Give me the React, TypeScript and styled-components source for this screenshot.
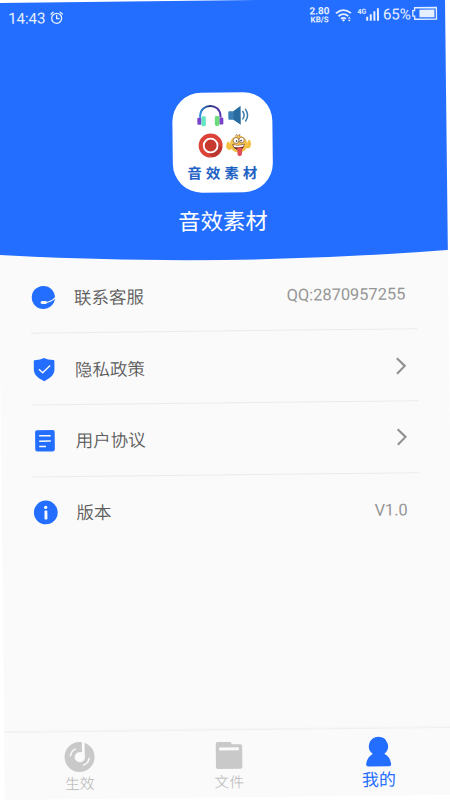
import React from "react";
import styled, { createGlobalStyle } from "styled-components";

const BLUE = "#236eff";
const CJK = `Roboto, "Noto Sans CJK SC", sans-serif`;

const GlobalStyle = createGlobalStyle`
  *, *::before, *::after { box-sizing: border-box; }
  html, body { margin: 0; height: 100%; overflow: hidden; background: #fff; }
  svg { display: block; flex: none; overflow: visible; }
`;

const Stage = styled.div`
  width: 450px;
  height: 800px;
  overflow: hidden;
  background: #fff;
  padding-top: 2.7px;
`;

const Screen = styled.main`
  display: flex;
  flex-direction: column;
  width: 449px;
  height: 797px;
  margin-left: -4px;
  background: #fafafa;
  font-family: ${CJK};
  transform: rotate(-0.65deg);
  transform-origin: 0 0;
`;

const Header = styled.header`
  display: flex;
  flex-direction: column;
  align-items: center;
  flex: none;
  height: 259.5px;
  color: #fff;
  background: ${BLUE};
  clip-path: circle(3364px at 50% -3104.5px);
`;

const StatusBar = styled.div`
  display: flex;
  align-items: center;
  justify-content: space-between;
  width: 100%;
  height: 32px;
  padding: 0 8.5px 0 12px;
  color: #e6efff;
`;

const StatusGroup = styled.div`
  display: flex;
  align-items: center;
`;

const StatusText = styled.span<{ $ml?: number }>`
  font-size: 15.2px;
  line-height: 20px;
  letter-spacing: -0.15px;
  margin-left: ${(p) => p.$ml ?? 0}px;
`;

const AlarmSlot = styled.span`
  margin-left: 4.5px;
  margin-top: -1px;
`;

const Speed = styled.div`
  display: flex;
  flex-direction: column;
  align-items: center;
  margin-right: 6px;
  margin-top: -1px;
  font-weight: 700;
  font-size: 10px;
  line-height: 10px;
`;

const SpeedUnit = styled.span`
  font-size: 8px;
  line-height: 8px;
`;

const Network = styled.div`
  display: flex;
  align-items: flex-start;
  margin-left: 5px;
  margin-top: -1px;
  font-weight: 700;
  font-size: 7px;
  line-height: 8px;
`;

const Logo = styled.div`
  display: flex;
  flex-direction: column;
  align-items: center;
  width: 100px;
  height: 100px;
  margin-top: 60px;
  padding-top: 10.5px;
  border-radius: 29px;
  background: #fff;
`;

const LogoGrid = styled.div`
  display: grid;
  grid-template-columns: 26px 26px;
  grid-template-rows: 24px 26px;
  gap: 5.5px 1.5px;
  padding-left: 5px;
  place-items: center;
`;

const LogoName = styled.span`
  margin-top: 6.5px;
  padding-left: 4px;
  font-size: 14.4px;
  line-height: 18px;
  font-weight: 700;
  letter-spacing: 4.1px;
  white-space: nowrap;
  color: #1f62c4;
`;

const AppTitle = styled.h1`
  margin: 12.5px 0 0;
  font-size: 22.4px;
  line-height: 32px;
  font-weight: 400;
`;

const List = styled.ul`
  flex: 1;
  margin: 0;
  padding: 0 31px 0 31px;
  list-style: none;
`;

const Item = styled.li`
  display: flex;
  align-items: center;
  height: 71.8px;
  padding-right: 12px;
  border-bottom: 1px solid #ebebeb;

  &:last-child {
    border-bottom-color: transparent;
  }
`;

const ItemIcon = styled.span`
  display: flex;
  justify-content: center;
  width: 25px;
`;

const ItemLabel = styled.span`
  flex: 1;
  margin-left: 18.7px;
  padding-top: 2px;
  font-size: 17.5px;
  line-height: 26px;
  font-weight: 350;
  color: #5c5c5c;
`;

const ItemValue = styled.span`
  padding-top: 3px;
  font-size: 16.4px;
  line-height: 24px;
  color: #959595;
`;

const TabBar = styled.nav`
  display: grid;
  grid-template-columns: repeat(3, 1fr);
  flex: none;
  height: 68px;
  border-top: 1px solid #efefef;
  box-shadow: 0 -1px 2px rgba(0, 0, 0, 0.025);
`;

const Tab = styled.div<{ $active?: boolean }>`
  display: flex;
  flex-direction: column;
  align-items: center;
  padding-top: ${(p) => (p.$active ? 8 : 10)}px;
  color: ${(p) => (p.$active ? BLUE : "#c9c9c9")};
`;

const TabLabel = styled.span<{ $active?: boolean }>`
  margin-top: ${(p) => (p.$active ? 3 : 2)}px;
  font-size: ${(p) => (p.$active ? 17 : 14.8)}px;
  line-height: 20px;
  font-weight: ${(p) => (p.$active ? 400 : 300)};
  color: ${(p) => (p.$active ? BLUE : "#b4b4b4")};
`;

const AlarmIcon = () => (
  <svg width="13" height="13" viewBox="0 0 13 13" fill="none" stroke="currentColor" strokeWidth="1.3" strokeLinecap="round">
    <circle cx="6.5" cy="7" r="5" />
    <path d="M6.5 4.2V7.3H9M.8 2.8 3 .9M12.2 2.8 10 .9" />
  </svg>
);

const WifiIcon = () => (
  <svg width="17" height="13" viewBox="0 0 17 13" fill="none" stroke="currentColor" strokeWidth="1.8">
    <path d="M.8 4.2Q8.3-2 15.8 4.2M3.3 7.1Q8.3 3 13.2 7.1M5.7 9.7Q8.3 7.8 10.7 9.7" />
    <path d="m8.3 12.6-1.7-1.7q1.7-1.2 3.3 0Z" fill="currentColor" stroke="none" />
    <path d="m12.6 9.6 1.5-1.8 1.5 1.8ZM12.6 10.8h3l-1.5 1.8Z" fill="currentColor" stroke="none" />
  </svg>
);

const SignalIcon = () => (
  <svg width="13" height="13" viewBox="0 0 13 13" fill="currentColor">
    <path d="M0 9h2v4H0zM3.6 6.5h2V13h-2zM7.2 3.5h2V13h-2zM10.8.5h2V13h-2z" />
  </svg>
);

const BatteryIcon = () => (
  <svg width="26" height="15" viewBox="0 0 26 15">
    <path d="M3.500.5H25.300v11.500H3.500V8.900H1.700V3.400h1.800Z" fill="none" stroke="currentColor" strokeWidth="1.300" />
    <path d="M8.300 2.500h15v7.600h-15z" fill="currentColor" />
  </svg>
);

const HeadphonesIcon = () => (
  <svg width="26" height="22" viewBox="0 0 26 22">
    <defs>
      <linearGradient id="band" x1="0" x2="1">
        <stop offset="0" stopColor="#2d8fe0" />
        <stop offset=".45" stopColor="#263777" />
        <stop offset="1" stopColor="#5a35b0" />
      </linearGradient>
    </defs>
    <path d="M2.8 13V11C3.4-1.8 22.6-1.8 23.2 11v2" fill="none" stroke="url(#band)" strokeWidth="2" />
    <rect x="0" y="13" width="4" height="7" rx="1" fill="#7745cb" />
    <rect x="22" y="13" width="4" height="7" rx="1" fill="#7745cb" />
    <rect x="4" y="11.5" width="4.5" height="10" rx="1.4" fill="#65e5c0" />
    <rect x="17.5" y="11.5" width="4.5" height="10" rx="1.4" fill="#6edb7c" />
  </svg>
);

const SpeakerIcon = () => (
  <svg width="20" height="20" viewBox="0 0 20 20">
    <path d="M1 6h4.500v8.500H1Q0 14.500 0 13.500V7Q0 6 1 6Z" fill="#3a80b7" />
    <path d="M5 6 12.400.5v19L5 14.500Z" fill="#286b9f" />
    <path d="M14.500 6.300q2.600 3.700 0 7.400M17.300 4.200q4 5.800 0 11.600" fill="none" stroke="#397dae" strokeWidth="1.500" strokeLinecap="round" />
  </svg>
);

const RecordIcon = () => (
  <svg width="24" height="24" viewBox="0 0 24 24">
    <circle cx="12" cy="12" r="12" fill="#dc4338" />
    <path d="m17 7.500 6.500 6.800A12 12 0 0 1 14 23.800L7 17Z" fill="#b93730" />
    <circle cx="12" cy="12" r="6.900" fill="#c8392f" stroke="#fff" strokeWidth="1.800" />
    <circle cx="12" cy="12" r="4" fill="#c8392f" />
  </svg>
);

const SmileyIcon = () => (
  <svg width="26" height="23" viewBox="0 0 26 23">
    <path d="M1.500 8 3 7l1.500 3 2 .5v4q-2.500 2-5 0Q-.5 12 1.500 8ZM24.500 6 23 5.500 21.500 9l-2 1v3.500q3 1.500 5-.5 1.800-3 0-7Z" fill="#f5bf42" />
    <ellipse cx="13" cy="10" rx="8.700" ry="8.500" fill="#f2c24b" />
    <path d="m10 2 1-2 1 1.500L14.500.3 14 2" fill="none" stroke="#aa742c" strokeWidth=".8" />
    <ellipse cx="10.500" cy="6.200" rx="2.900" ry="3" fill="#fff" stroke="#80552e" strokeWidth=".7" />
    <ellipse cx="16" cy="5.800" rx="2.700" ry="2.800" fill="#fff" stroke="#80552e" strokeWidth=".7" />
    <circle cx="11" cy="6.800" r=".8" fill="#2d211c" />
    <circle cx="15.500" cy="6.400" r=".8" fill="#2d211c" />
    <path d="M6.500 10q6.500 1.600 12.500-.5-.8 6-5.500 6.500Q8 15.800 6.500 10Z" fill="#693025" />
    <path d="M7.500 10.600q5.500 1.200 10.800-.4l-.6 2.200q-4.700 1-9.300.2Z" fill="#fff" />
    <path d="M11.500 13.800q2.500-1.500 5 .3l-.3 6.200q-2 3-4.300.5Z" fill="#df4d56" />
  </svg>
);

const ServiceIcon = () => (
  <svg width="24" height="24" viewBox="0 0 24 24">
    <circle cx="12" cy="12" r="11.600" fill={BLUE} />
    <path d="M13 17q6 .3 10.700-4.500" fill="none" stroke="#fafafa" strokeWidth="1.300" />
    <rect x="9.200" y="15.600" width="6.200" height="3" rx="1.500" fill="#fafafa" />
  </svg>
);

const ShieldIcon = () => (
  <svg width="22" height="24" viewBox="0 0 22 24">
    <path d="M11 .5Q14.500 2.500 20.400 2.600q.9 0 .9.900V12c0 5.500-4.300 9-10.300 11.700C5 21 .7 17.500.7 12V3.500q0-.9.9-.9Q7.500 2.500 11 .5Z" fill={BLUE} />
    <path d="m5.800 11.700 3.700 3.600L17 8.200" fill="none" stroke="#fafafa" strokeWidth="1.400" />
  </svg>
);

const DocumentIcon = () => (
  <svg width="20" height="22" viewBox="0 0 20 22">
    <rect x=".2" y=".6" width="19.600" height="21.400" rx="2" fill={BLUE} />
    <path d="M4.200 6.300h11.600M4.200 11.600h11.600M4.200 17h6.800" fill="none" stroke="#fafafa" strokeWidth="1.500" />
  </svg>
);

const InfoIcon = () => (
  <svg width="24" height="24" viewBox="0 0 24 24">
    <circle cx="12" cy="12" r="11.900" fill={BLUE} />
    <circle cx="12" cy="6.900" r="1.700" fill="#fafafa" />
    <rect x="10.700" y="10" width="2.900" height="9" rx=".8" fill="#fafafa" />
  </svg>
);

const ChevronIcon = () => (
  <svg width="11" height="18" viewBox="0 0 11 18" fill="none" stroke="#909090" strokeWidth="2.1">
    <path d="m1.800 1.700 7.800 7.800-7.800 7.800" />
  </svg>
);

const DiscIcon = () => (
  <svg width="30" height="30" viewBox="0 0 30 30">
    <circle cx="15" cy="15" r="15" fill="currentColor" />
    <circle cx="15.300" cy="15" r="5.200" fill="#fafafa" />
    <path d="M17.500 0h2.700v15h-2.700Z" fill="#fafafa" />
    <path d="M5.900 13.500Q7 8.500 11 7M24.500 16.500Q23.500 21.500 19 23" fill="none" stroke="#fafafa" strokeWidth="1.500" strokeLinecap="round" />
  </svg>
);

const FolderIcon = () => (
  <svg width="27" height="30" viewBox="0 0 27 30">
    <path d="M2 1.500h12.800q1 0 1.400 2.500H25q1.700 0 1.700 1.700v21q0 1.800-1.800 1.800H2.100q-1.800 0-1.800-1.800V3.300Q.3 1.500 2 1.500Z" fill="currentColor" />
    <rect x="3.500" y="7" width="20" height="3" rx="1.200" fill="#fafafa" />
  </svg>
);

const PersonIcon = () => (
  <svg width="26" height="30" viewBox="0 0 26 30" fill="currentColor">
    <path d="M13 0a9.600 9.600 0 0 1 5.800 17.200Q24.400 20 25.500 27.300 25.700 29.700 23.400 29.700H2.600Q.3 29.700.5 27.300 1.600 20 7.200 17.200A9.600 9.600 0 0 1 13 0Z" />
  </svg>
);

const items = [
  { label: "联系客服", icon: <ServiceIcon />, value: "QQ:2870957255" },
  { label: "隐私政策", icon: <ShieldIcon /> },
  { label: "用户协议", icon: <DocumentIcon /> },
  { label: "版本", icon: <InfoIcon />, value: "V1.0" },
];

const tabs = [
  { label: "生效", icon: <DiscIcon /> },
  { label: "文件", icon: <FolderIcon /> },
  { label: "我的", icon: <PersonIcon />, active: true },
];

export default function App() {
  return (
    <Stage>
      <GlobalStyle />
      <Screen>
        <Header>
          <StatusBar>
            <StatusGroup>
              <StatusText>14:43</StatusText>
              <AlarmSlot>
                <AlarmIcon />
              </AlarmSlot>
            </StatusGroup>
            <StatusGroup>
              <Speed>
                <span>2.80</span>
                <SpeedUnit>KB/S</SpeedUnit>
              </Speed>
              <WifiIcon />
              <Network>
                <span>4G</span>
                <SignalIcon />
              </Network>
              <StatusText $ml={3.5}>65%</StatusText>
              <BatteryIcon />
            </StatusGroup>
          </StatusBar>
          <Logo>
            <LogoGrid>
              <HeadphonesIcon />
              <SpeakerIcon />
              <RecordIcon />
              <SmileyIcon />
            </LogoGrid>
            <LogoName>音效素材</LogoName>
          </Logo>
          <AppTitle>音效素材</AppTitle>
        </Header>
        <List>
          {items.map((item) => (
            <Item key={item.label}>
              <ItemIcon>{item.icon}</ItemIcon>
              <ItemLabel>{item.label}</ItemLabel>
              {item.value ? <ItemValue>{item.value}</ItemValue> : <ChevronIcon />}
            </Item>
          ))}
        </List>
        <TabBar>
          {tabs.map((tab) => (
            <Tab key={tab.label} $active={tab.active}>
              {tab.icon}
              <TabLabel $active={tab.active}>{tab.label}</TabLabel>
            </Tab>
          ))}
        </TabBar>
      </Screen>
    </Stage>
  );
}
